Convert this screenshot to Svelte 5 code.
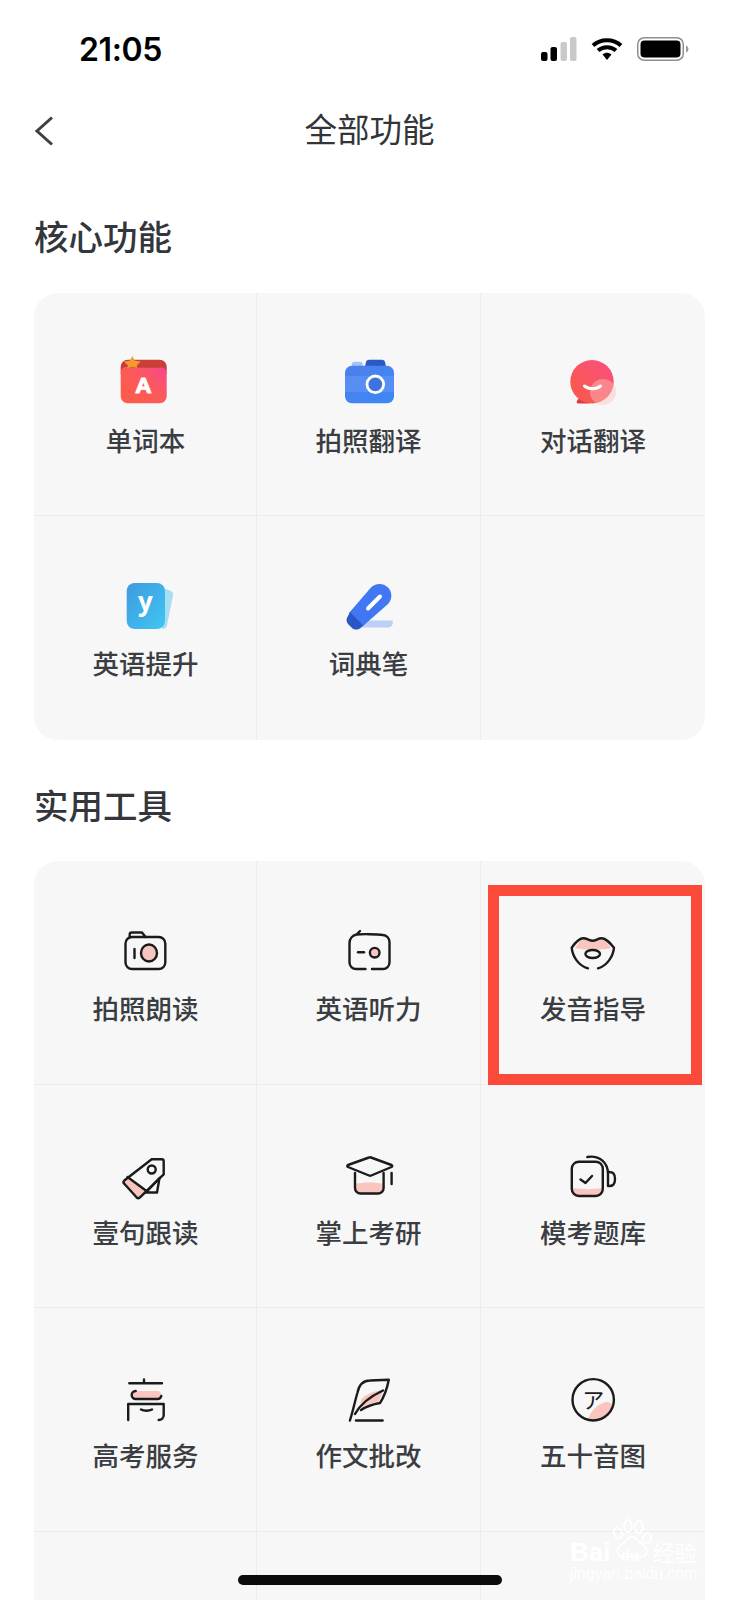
<script lang="ts">
	const sections = [
		{
			title: '核心功能',
			items: [
				{ label: '单词本', icon: 'book' },
				{ label: '拍照翻译', icon: 'photo' },
				{ label: '对话翻译', icon: 'chat' },
				{ label: '英语提升', icon: 'card' },
				{ label: '词典笔', icon: 'pen' },
				{ label: '', icon: '' }
			]
		},
		{
			title: '实用工具',
			items: [
				{ label: '拍照朗读', icon: 'camera' },
				{ label: '英语听力', icon: 'radio' },
				{ label: '发音指导', icon: 'lips' },
				{ label: '壹句跟读', icon: 'tag' },
				{ label: '掌上考研', icon: 'cap' },
				{ label: '模考题库', icon: 'mug' },
				{ label: '高考服务', icon: 'gao' },
				{ label: '作文批改', icon: 'feather' },
				{ label: '五十音图', icon: 'kana' },
				{ label: '', icon: '' },
				{ label: '', icon: '' },
				{ label: '', icon: '' }
			]
		}
	];
</script>

{#snippet icon(name: string)}
	<svg class="icon" viewBox="0 0 56 56" aria-hidden="true">
		{#if name === 'book'}
			<defs>
				<linearGradient id="bookFill" x1="0" y1="1" x2="1" y2="0.1">
					<stop offset="0" stop-color="#fd5b4a" />
					<stop offset="0.55" stop-color="#fc5a58" />
					<stop offset="1" stop-color="#f8478a" />
				</linearGradient>
			</defs>
			<path d="M2.700 18V10.700a7 7 0 0 1 7-7h32a7 7 0 0 1 7 7V18Z" fill="#c93f38" />
			<path d="M2.700 16a6 6 0 0 1 6-5C18 12 36 12 43 11.500a5.700 5.700 0 0 1 5.700 5.500V40.300a7 7 0 0 1-7 7h-32a7 7 0 0 1-7-7Z" fill="url(#bookFill)" />
			<path d="M14.300 0l2.500 4.800 5.900.6-4 4 .6 2.600-5-1.200-5 1.200.6-2.600-4-4 5.900-.6Z" fill="#f59a2f" />
			<text x="25.300" y="36.500" class="logo-a">A</text>
		{:else if name === 'photo'}
			<defs>
				<linearGradient id="photoFill" x1="0" y1="0" x2="1" y2="1">
					<stop offset="0" stop-color="#4f7fea" />
					<stop offset="1" stop-color="#3a88f6" />
				</linearGradient>
			</defs>
			<path d="M10.700 12V8.700a3 3 0 0 1 3-3h5a3 3 0 0 1 3 3V12Z" fill="#a4c0f4" />
			<path d="M24 11l.8-4.300a3.500 3.500 0 0 1 3.400-3h12.600a3.500 3.500 0 0 1 3.400 3L45 11Z" fill="#2a58c4" />
			<rect x="4" y="9.700" width="49" height="37.600" rx="7" fill="url(#photoFill)" />
			<rect x="4" y="20" width="49" height="16" fill="#6a9af8" opacity="0.5" />
			<circle cx="34.300" cy="28.300" r="8.300" fill="#3f72dc" stroke="#fff" stroke-width="2.800" />
		{:else if name === 'chat'}
			<defs>
				<linearGradient id="chatFill" x1="0" y1="1" x2="1" y2="0">
					<stop offset="0" stop-color="#f85a44" />
					<stop offset="1" stop-color="#fb4f80" />
				</linearGradient>
			</defs>
			<path d="M11.700 46.500c0-2 1.500-3.500 3-5l10 2.500v3.500H13a1.300 1.300 0 0 1-1.300-1Z" fill="#dd3a42" />
			<circle cx="27" cy="25.700" r="21.700" fill="url(#chatFill)" />
			<circle cx="38" cy="36" r="13" fill="#fbc4bf" opacity="0.45" />
			<path d="M19.500 30c4 3.500 12 3.500 16 0" fill="none" stroke="#fff" stroke-width="3" stroke-linecap="round" />
		{:else if name === 'card'}
			<defs>
				<linearGradient id="cardFill" x1="0" y1="0" x2="1" y2="1">
					<stop offset="0" stop-color="#3f9ae0" />
					<stop offset="1" stop-color="#3fc6f2" />
				</linearGradient>
			</defs>
			<path d="M44 9l8 2.500a4 4 0 0 1 3 5L49 46a5 5 0 0 1-5 4Z" fill="#a8def1" />
			<rect x="8.700" y="4" width="38.300" height="46" rx="8" fill="url(#cardFill)" />
			<text x="27.500" y="32" class="logo-y">y</text>
		{:else if name === 'pen'}
			<path d="M17 48.500H47a5 5 0 0 0 4.500-7H28Z" fill="#bcd0f7" />
			<path d="M30 8.500a11.800 11.800 0 0 1 17 16.500L22 47l-14-13Z" fill="#4177f3" />
			<path d="M9 33l13.500 13.500-3 2.500c-2.500 2-6 2-8.500 0l-4-4c-2-2.500-2-5.500 0-8Z" fill="#2b57c6" />
			<path d="M27 29.500 39 17.500" stroke="#fff" stroke-width="4" stroke-linecap="round" />
		{:else if name === 'camera'}
			<g class="line">
				<path d="M11.700 13v-2.500a2 2 0 0 1 2-2H24l3.500 4.500" />
				<rect x="7.500" y="13" width="39.800" height="32" rx="6.500" />
				<path d="M16.500 25v9" />
				<ellipse cx="31" cy="29" rx="8" ry="8.500" fill="#f9c6bf" />
			</g>
		{:else if name === 'radio'}
			<g class="line">
				<path d="M24.500 45H15a6.500 6.500 0 0 1-6.500-6.500V19c0-4 3-7.500 7-8.500L19 7M15.500 10.500C20 10 36 10 42 11a7 7 0 0 1 6.500 7v20.500A6.500 6.500 0 0 1 42 45H31" />
				<path d="M17 28.300h6" />
				<circle cx="33.700" cy="28.700" r="4.800" fill="#f9c6bf" />
			</g>
		{:else if name === 'lips'}
			<path d="M10 24c3-4.500 6-9.700 8.300-9.700 4 0 6 2.400 9.400 2.400s5-2.400 9-2.400c2.600 0 6 5 9.300 9.700-5 1.500-10 1.500-18.300 1.500S15 25.500 10 24Z" fill="#f9c6bf" />
			<g class="line">
				<path d="M23 44.300C14 42 7.500 33 6.700 23.700 10 19 14 14.300 18.300 14.300c4 0 6 2.400 9.400 2.400s5-2.400 9-2.400c4.300 0 8.300 4.700 12.300 9.400C48.200 33 41.500 42 33 44.300" />
				<ellipse cx="27.700" cy="30" rx="7.300" ry="4" fill="#f7f7f7" />
			</g>
		{:else if name === 'tag'}
			<path d="M9.500 29 5.800 33c-.8 1-.8 2 0 3l12.700 13.200c1 1 2.300 1 3.300 0l6.700-6.200Z" fill="#f9c6bf" />
			<g class="line">
				<path d="M33.700 11.300 6.300 32.500c-1 1-1 2.300 0 3.300l12.200 13.500c1 1 2.500 1 3.500 0L42.300 29.700l3.400-3.400V13.300a2 2 0 0 0-2-2Z" />
				<path d="M41.500 30 28 44.500h11Z" />
				<path d="M9.500 29 28.500 43" />
				<circle cx="33.700" cy="21.500" r="4" />
			</g>
		{:else if name === 'cap'}
			<path d="M14 36c8-2 20-2 28.600 0v4a5.500 5.500 0 0 1-5.500 5.500H19.500A5.500 5.500 0 0 1 14 40Z" fill="#f9c6bf" />
			<g class="line">
				<path d="M14 25v15a5.500 5.500 0 0 0 5.500 5.500h17.600a5.500 5.500 0 0 0 5.500-5.500V25" />
				<path d="M28 9.500 7 17c-1 .5-1 1.500 0 2l21 8.500c.8.300 1.500.300 2.300 0L50.500 19c1-.5 1-1.500 0-2L30 9.500c-.8-.3-1.300-.3-2 0Z" fill="#f7f7f7" />
				<path d="M50.600 25v11" />
			</g>
		{:else if name === 'mug'}
			<path d="M6.800 40c10 1.500 21 1.500 31 0v1a7 7 0 0 1-7 7h-17a7 7 0 0 1-7-7Z" fill="#f9c6bf" />
			<g class="line">
				<rect x="6.800" y="13.700" width="31" height="34.300" rx="7" />
				<path d="M22.300 9c12-2 20.700 5.500 20.700 17v12c5 .5 7-2 7-7s-2-7.500-7-7" />
				<path d="M15.500 31.500 20.500 35 27 28" />
			</g>
		{:else if name === 'gao'}
			<rect x="13.700" y="20" width="29.600" height="8" rx="4" fill="#f9c6bf" />
			<g class="line">
				<path d="M11.300 12.200H44M26 8.500v3.700" />
				<path d="M17.700 20a4 4 0 0 0 0 8H39.300a4 4 0 0 0 4-3" />
				<path d="M10.200 49V33H45.700V44a5 5 0 0 1-5 5" />
				<path d="M23 38.500c3 1.700 8 1.700 11 0" />
			</g>
		{:else if name === 'feather'}
			<path d="M21 27.500C27 22 34 20 42 19c-1 5-2.500 8.500-5 12-6 .5-12 3-17 6-1.500-3-1-6 1-9.500Z" fill="#f9c6bf" />
			<g class="line">
				<path d="M8.900 49.500C12 40 14 30 16.500 21.500 18 14.500 22 9.500 29 9.500L47.800 8.800C46 18 43 26 39 32c-6 1-13 3-19 7" />
				<path d="M14 43C20 32 30 25 42 19.500" />
				<path d="M15 49.500H41.600" />
			</g>
		{:else if name === 'kana'}
			<path d="M48 34.500A20.500 20.500 0 0 1 28.500 49c-2.500 0-5-.5-5.500-1 3-8 9-15 18-17 3-.5 5.500 1.500 7 3.500Z" fill="#f9c6bf" />
			<g class="line">
				<circle cx="28.200" cy="28.800" r="20.700" />
			</g>
			<text x="28.200" y="36.500" class="kana">ア</text>
		{/if}
	</svg>
{/snippet}

<div class="page">
	<header class="status">
		<span class="time">21:05</span>
		<div class="status-icons">
			<svg width="36" height="24" viewBox="0 0 36 24" aria-hidden="true">
				<rect x="0" y="15" width="6.500" height="9" rx="2" fill="#000" />
				<rect x="9.500" y="10" width="6.500" height="14" rx="2" fill="#000" />
				<rect x="19.500" y="5" width="6.500" height="19" rx="2" fill="#c9c9c9" />
				<rect x="29" y="0" width="6.500" height="24" rx="2" fill="#c9c9c9" />
			</svg>
			<svg width="32" height="24" viewBox="0 0 32 24" aria-hidden="true">
				<path d="M2 8.500C9.500 1.500 22.500 1.500 30 8.500M7 13.500c5-4.500 13-4.500 18 0" fill="none" stroke="#000" stroke-width="4" />
				<path d="M11.500 17.500c3-2.300 6-2.300 9 0L16 23Z" fill="#000" />
			</svg>
			<svg width="52" height="24" viewBox="0 0 52 24" aria-hidden="true">
				<rect x="0.750" y="0.750" width="45.500" height="22.500" rx="6.500" fill="none" stroke="#8e8e8e" stroke-width="1.500" />
				<rect x="3.500" y="3.500" width="40" height="17" rx="4" fill="#000" />
				<path d="M49 8.500c1.500.5 2.500 2 2.500 3.500s-1 3-2.500 3.500Z" fill="#9a9a9a" />
			</svg>
		</div>
	</header>

	<nav class="nav">
		<svg class="back" width="20" height="30" viewBox="0 0 20 30" aria-hidden="true">
			<path d="M18 1.500 3 15l15 13.500" fill="none" stroke="#3c3f44" stroke-width="3" />
		</svg>
		<h1>全部功能</h1>
	</nav>

	{#each sections as section}
		<section class="section">
			<h2>{section.title}</h2>
			<div class="grid">
				{#each section.items as item}
					<div class="cell">
						{#if item.label}
							{@render icon(item.icon)}
							<span class="label">{item.label}</span>
						{/if}
					</div>
				{/each}
			</div>
		</section>
	{/each}

	<div class="highlight"></div>

	<div class="watermark">
		<svg class="paw" width="44" height="44" viewBox="0 0 44 44" aria-hidden="true">
			<g fill="none" stroke="#fff" stroke-width="1.800">
				<ellipse cx="10" cy="15" rx="4" ry="5.500" transform="rotate(-25 10 15)" />
				<ellipse cx="20" cy="8" rx="4" ry="6" />
				<ellipse cx="31" cy="9" rx="4" ry="6" />
				<ellipse cx="39" cy="20" rx="4" ry="5.500" transform="rotate(20 39 20)" />
				<path d="M24 19c-5 0-6 5-11 8-5 3-5 11 2 12 3 .5 6-1 9-1s6 1.500 9 1c7-1 7-9 2-12-5-3-6-8-11-8Z" />
			</g>
		</svg>
		<div class="wm-brand"><span>Bai</span><span class="wm-du">du</span><span class="wm-cn">经验</span></div>
		<div class="wm-url">jingyan.baidu.com</div>
	</div>

	<div class="home-bar"></div>
</div>

<style>
	:global(body) {
		margin: 0;
		background: #fff;
	}
	.page {
		position: relative;
		width: 739px;
		height: 1600px;
		overflow: hidden;
		background: #fff;
		font-family: 'Noto Sans CJK SC', 'Noto Sans', sans-serif;
	}
	.status {
		height: 98px;
		display: flex;
		align-items: center;
		justify-content: space-between;
		padding: 0 50px 0 79px;
	}
	.time {
		font-family: Inter, 'Liberation Sans', sans-serif;
		font-size: 32px;
		font-weight: 600;
		color: #000;
		letter-spacing: -0.4px;
	}
	.status-icons {
		display: flex;
		align-items: center;
		gap: 14px;
	}
	.status-icons svg {
		display: block;
	}
	.nav {
		position: relative;
		height: 60px;
		display: flex;
		align-items: center;
		justify-content: center;
	}
	.back {
		position: absolute;
		left: 34px;
		top: 18px;
	}
	h1 {
		margin: 0;
		font-size: 32.500px;
		font-weight: 400;
		line-height: 60px;
		color: #333538;
	}
	.section {
		padding: 0 34px;
		margin-bottom: 36px;
	}
	.nav + .section {
		margin-top: 49px;
	}
	h2 {
		margin: 0 0 29.500px;
		font-size: 34.500px;
		font-weight: 500;
		line-height: 56px;
		color: #33363a;
	}
	.grid {
		display: grid;
		grid-template-columns: 223px 224px 224px;
		grid-auto-rows: 223.500px;
		width: 671px;
		background: #f7f7f7;
		border-radius: 24px;
		overflow: hidden;
	}
	.cell {
		box-sizing: border-box;
		display: flex;
		flex-direction: column;
		align-items: center;
		padding-top: 63px;
		border-right: 1px solid #ececec;
		border-bottom: 1px solid #ececec;
	}
	.cell:nth-child(3n + 1) {
		padding-left: 1px;
	}
	.cell:nth-child(3n) {
		border-right: 0;
	}
	.section:first-of-type .cell:nth-last-child(-n + 3) {
		border-bottom: 0;
	}
	.icon {
		display: block;
		width: 56px;
		height: 56px;
		overflow: visible;
	}
	.label {
		margin-top: 10px;
		font-size: 26.500px;
		font-weight: 500;
		line-height: 36px;
		color: #3a3d42;
	}
	.line {
		fill: none;
		stroke: #1b1b1b;
		stroke-width: 2.400;
		stroke-linecap: round;
		stroke-linejoin: round;
	}
	.logo-a {
		font-family: Lato, 'Open Sans', sans-serif;
		font-size: 21px;
		font-weight: 900;
		fill: #fff;
		stroke: #fff;
		stroke-width: 1.200;
		stroke-linejoin: round;
		text-anchor: middle;
	}
	.logo-y {
		font-family: 'Open Sans', sans-serif;
		font-size: 26px;
		font-weight: 700;
		fill: #fff;
		text-anchor: middle;
	}
	.kana {
		font-family: 'Noto Sans CJK JP', sans-serif;
		font-size: 22px;
		font-weight: 400;
		fill: #1b1b1b;
		text-anchor: middle;
	}
	.highlight {
		position: absolute;
		left: 488px;
		top: 885px;
		box-sizing: border-box;
		width: 214px;
		height: 200px;
		border: 11.500px solid #fb4a3a;
	}
	.watermark {
		position: absolute;
		left: 566px;
		top: 1518px;
		width: 140px;
		height: 70px;
		color: #fff;
		font-family: 'Liberation Sans', 'Noto Sans CJK SC', sans-serif;
	}
	.paw {
		position: absolute;
		left: 42px;
		top: 0;
	}
	.wm-brand {
		position: absolute;
		left: 4px;
		top: 18px;
		display: flex;
		align-items: baseline;
		font-size: 26px;
		line-height: 30px;
		font-weight: 700;
		white-space: nowrap;
	}
	.wm-du {
		margin: 0 14px 0 10px;
		font-size: 15px;
	}
	.wm-cn {
		font-family: 'Noto Sans CJK SC', sans-serif;
		font-size: 22px;
		font-weight: 400;
	}
	.wm-url {
		position: absolute;
		left: 4px;
		top: 47px;
		font-size: 15.800px;
		line-height: 18px;
		white-space: nowrap;
	}
	.home-bar {
		position: absolute;
		left: 238px;
		top: 1575px;
		width: 264px;
		height: 10px;
		border-radius: 5px;
		background: #0c0c0c;
	}
</style>
